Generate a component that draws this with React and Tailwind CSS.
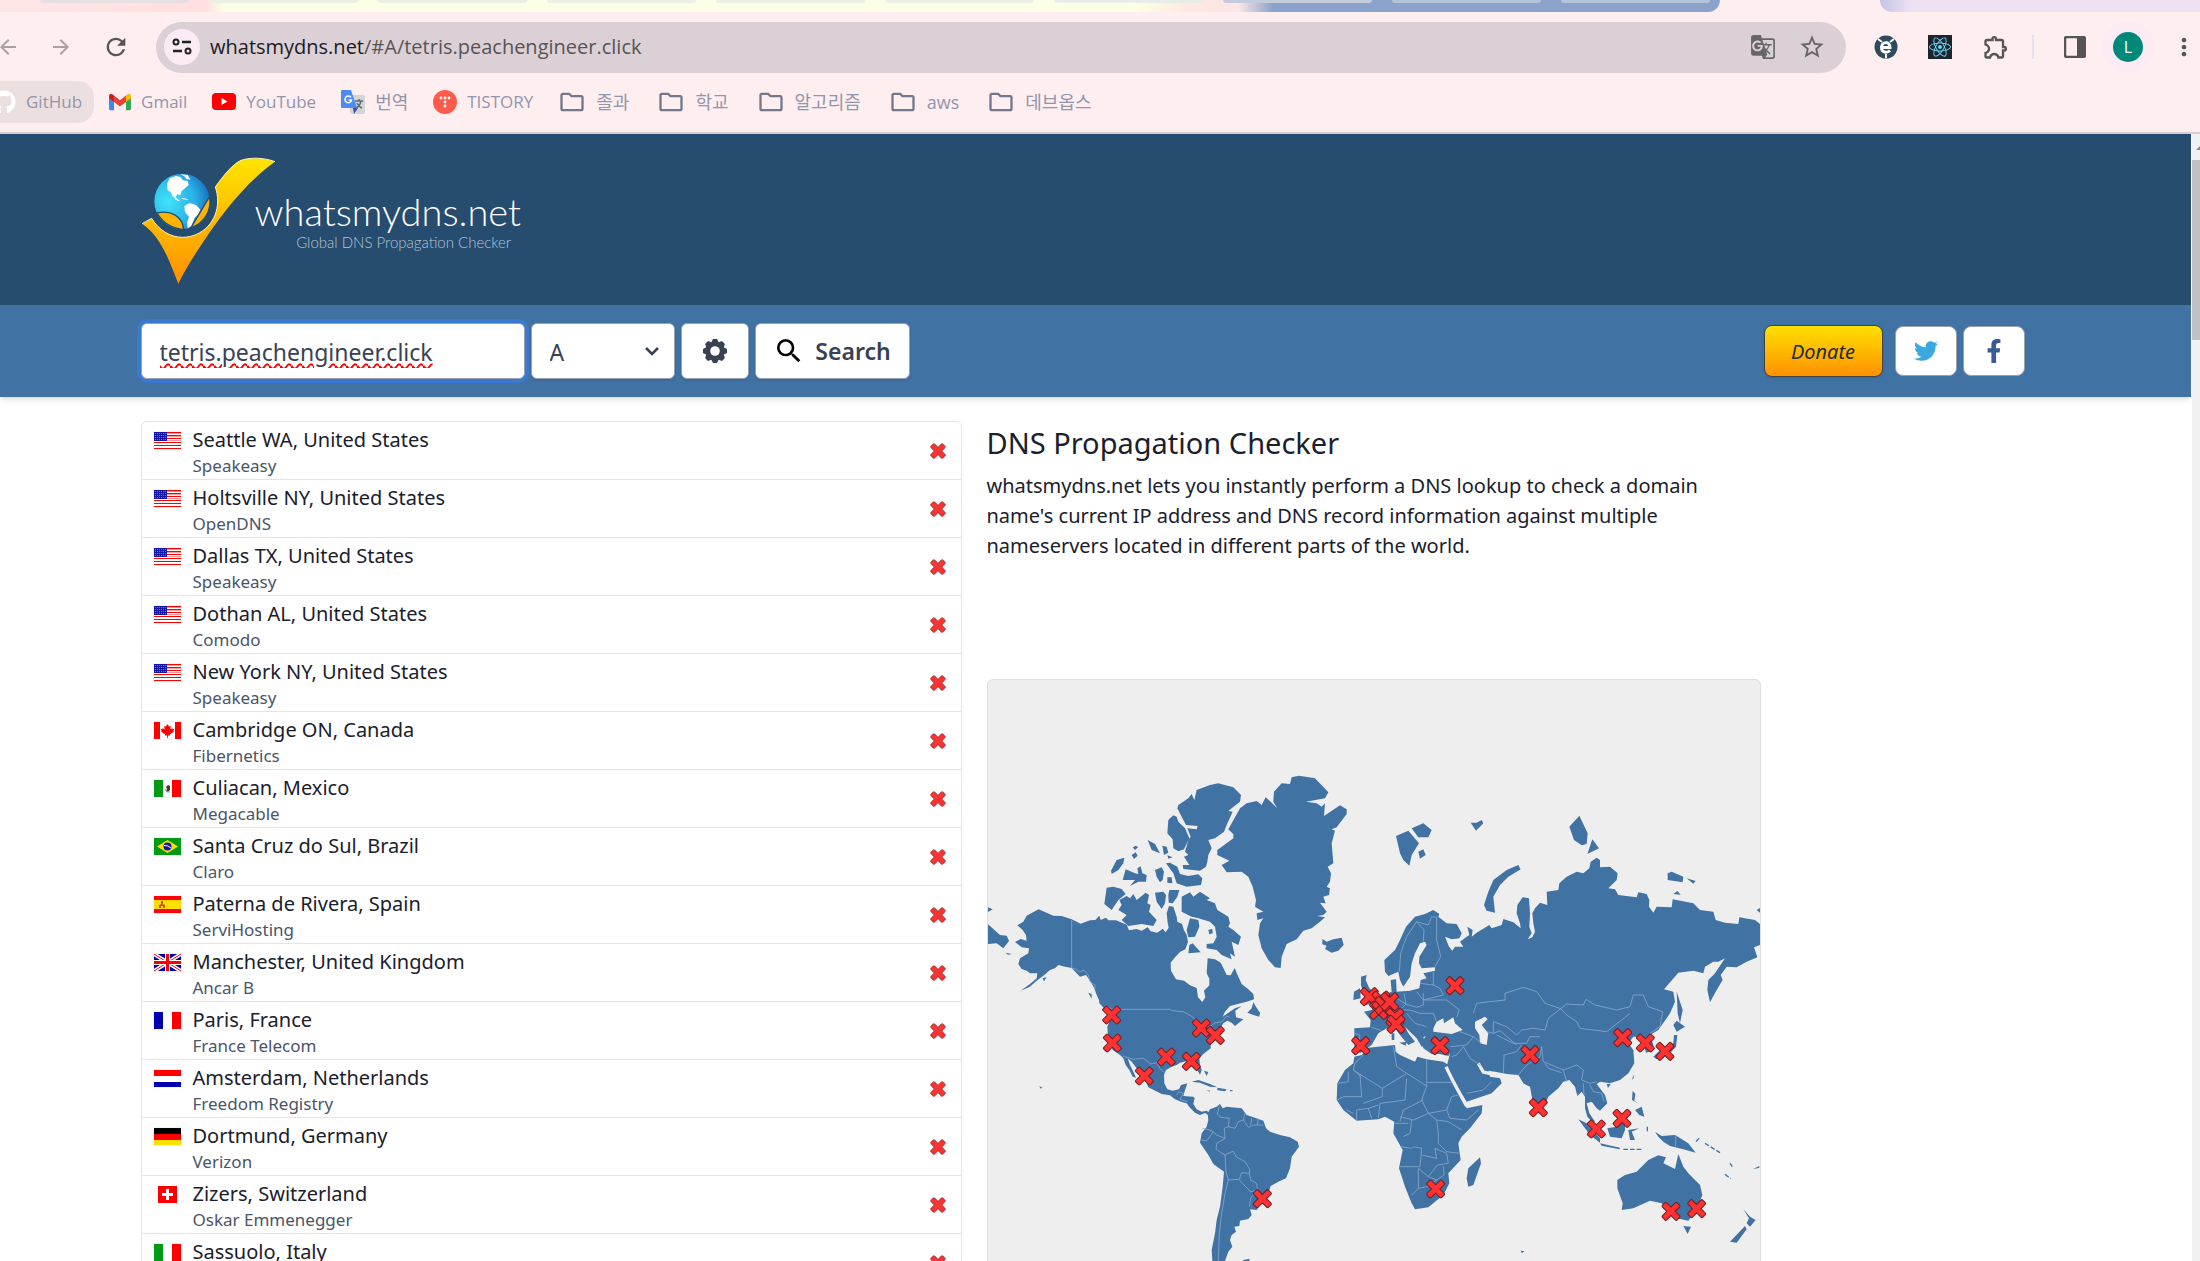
import React, { useState } from 'react';
import { FaGithub, FaTwitter, FaFacebookF, FaReact } from 'react-icons/fa';
import { MdArrowBack, MdArrowForward, MdRefresh, MdStarBorder, MdGTranslate, MdOutlineExtension, MdMoreVert, MdSearch, MdOutlineFolder } from 'react-icons/md';

const servers = [
  { flag: 'us', place: 'Seattle WA, United States', provider: 'Speakeasy' },
  { flag: 'us', place: 'Holtsville NY, United States', provider: 'OpenDNS' },
  { flag: 'us', place: 'Dallas TX, United States', provider: 'Speakeasy' },
  { flag: 'us', place: 'Dothan AL, United States', provider: 'Comodo' },
  { flag: 'us', place: 'New York NY, United States', provider: 'Speakeasy' },
  { flag: 'ca', place: 'Cambridge ON, Canada', provider: 'Fibernetics' },
  { flag: 'mx', place: 'Culiacan, Mexico', provider: 'Megacable' },
  { flag: 'br', place: 'Santa Cruz do Sul, Brazil', provider: 'Claro' },
  { flag: 'es', place: 'Paterna de Rivera, Spain', provider: 'ServiHosting' },
  { flag: 'gb', place: 'Manchester, United Kingdom', provider: 'Ancar B' },
  { flag: 'fr', place: 'Paris, France', provider: 'France Telecom' },
  { flag: 'nl', place: 'Amsterdam, Netherlands', provider: 'Freedom Registry' },
  { flag: 'de', place: 'Dortmund, Germany', provider: 'Verizon' },
  { flag: 'ch', place: 'Zizers, Switzerland', provider: 'Oskar Emmenegger' },
  { flag: 'it', place: 'Sassuolo, Italy', provider: '' },
];

const markers = [
  [-565, 705], [-563, 789], [-467, 888], [-401, 831], [-326, 844], [-296, 744], [-254, 766], [-113, 1256],
  [182, 797], [208, 650], [236, 691], [243, 660], [252, 676], [285, 712], [269, 665], [288, 733], [420, 797],
  [465, 617], [690, 824], [715, 983], [889, 1047], [966, 1015], [968, 773], [1036, 789], [1095, 814],
  [407, 1227], [1113, 1294], [1190, 1286],
];

const tabs = ['bg-[#e7e0e3]', 'bg-[#eaf0e6]', 'bg-[#eaf0e6]', 'bg-[#eaf0e6]', 'bg-[#eaf0e6]', 'bg-[#eaf0e6]', 'bg-[#e8ece6]', 'bg-[#c4ccdb]', 'bg-[#b4c4da]', 'bg-[#b4c4da]'];

const CROSS = 'M-6 -31H6Q9 -31 9 -27V-9H27Q31 -9 31 -6V6Q31 9 27 9H9V27Q9 31 6 31H-6Q-9 31 -9 27V9H-27Q-31 9 -31 6V-6Q-31 -9 -27 -9H-9V-27Q-9 -31 -6 -31Z';

function Flag({ code }) {
  const h = (a, b, c) => (
    <>
      <rect width="27" height="6" fill={a} />
      <rect y="6" width="27" height="6" fill={b} />
      <rect y="12" width="27" height="5" fill={c} />
    </>
  );
  const v = (a, b, c) => (
    <>
      <rect width="9" height="17" fill={a} />
      <rect x="9" width="9" height="17" fill={b} />
      <rect x="18" width="9" height="17" fill={c} />
    </>
  );
  const flags = {
    us: (
      <>
        <rect width="27" height="17" fill="#fff" />
        {[0, 3, 6, 10, 13, 16].map(y => <rect key={y} y={y} width="27" height="1" fill="#f00" />)}
        {[1, 4, 8].map(y => <rect key={y} y={y} width="27" height="1" fill="#f99" />)}
        <rect width="13" height="9" fill="#1616a8" />
        {[1, 3, 5, 7].map(y => <path key={y} d={`M1 ${y + 0.5}H12`} stroke="#6b6bd0" strokeDasharray="1 1" />)}
      </>
    ),
    ca: (
      <>
        {v('#f00', '#fff', '#f00')}
        <rect x="6" width="15" height="17" fill="#fff" />
        <path d="M13.5 2l1.6 2.6 1.6-.6-.4 3.4 2-1.4.4 1.2 1.6-.2-1 2 .6.8-4 2.4.2 1.4-2.2-.2V16h-.8v-2.6l-2.2.2.2-1.4-4-2.4.6-.8-1-2 1.6.2.4-1.2 2 1.4-.4-3.4 1.6.6z" fill="#f00" />
      </>
    ),
    mx: (
      <>
        {v('#009a16', '#fff', '#f00')}
        <path d="M12 7l2-2 2 1v4l-2 2-2-1 1-2z" fill="#4a3a22" />
        <path d="M11 9l2 3 3 0" fill="none" stroke="#7fa9c0" />
      </>
    ),
    br: (
      <>
        <rect width="27" height="17" fill="#009a16" />
        <path d="M3 8.5L13.5 2 24 8.5 13.5 15z" fill="#ffe000" />
        <circle cx="13.500" cy="8.500" r="4" fill="#1616a8" />
        <path d="M10 7.500q4-.5 7 2.500" fill="none" stroke="#fff" />
      </>
    ),
    es: (
      <>
        <rect width="27" height="17" fill="#ffdf00" />
        <rect width="27" height="4" fill="#f00" />
        <rect y="13" width="27" height="4" fill="#f00" />
        <path d="M5 12V9l2-1V5h2v3l2 1v3H9v-2H7v2z" fill="#d4502a" />
      </>
    ),
    gb: (
      <>
        <rect width="27" height="17" fill="#0000a8" />
        <path d="M0 0L27 17M27 0L0 17" stroke="#fff" strokeWidth="4" />
        <path d="M0 0L27 17M27 0L0 17" stroke="#f00" strokeWidth="1" />
        <path d="M13.500 0V17M0 8.500H27" stroke="#fff" strokeWidth="5" />
        <path d="M13.500 0V17M0 8.500H27" stroke="#f00" strokeWidth="3" />
      </>
    ),
    fr: v('#0000b0', '#fff', '#f00'),
    it: v('#009a16', '#fff', '#f00'),
    nl: h('#f00', '#fff', '#0000b0'),
    de: h('#000', '#f00', '#ffdf00'),
  };
  if (code === 'ch') {
    return (
      <svg viewBox="0 0 19 17" className="mx-1 h-[17px] w-[19px] shrink-0">
        <rect width="19" height="17" fill="#f00" />
        <path d="M9.500 3V14M4 8.500H15" stroke="#fff" strokeWidth="3" />
      </svg>
    );
  }
  return (
    <svg viewBox="0 0 27 17" className="h-[17px] w-[27px] shrink-0 ring-1 ring-gray-100">
      {flags[code]}
    </svg>
  );
}

function Cross() {
  return (
    <svg viewBox="-30 -30 60 60" className="size-4">
      <path d={CROSS} transform="rotate(45)" fill="#ff3131" stroke="#b53a3a" strokeWidth="4" />
    </svg>
  );
}

function Bookmark({ icon, children }) {
  return (
    <a href="#" className="flex items-center gap-2.5">
      {icon}
      {children}
    </a>
  );
}

function BrowserChrome() {
  const folder = <MdOutlineFolder className="size-7 text-[#74788c]" />;
  return (
    <div className="bg-[#ffeeef]">
      <div className="flex h-3">
        <div className="flex min-w-0 flex-1 gap-5 overflow-hidden rounded-br-xl bg-[linear-gradient(90deg,#ffe6e6_0,#ffe0de_12%,#fcffe5_13%,#fcffe5_66%,#fde8e3_69%,#fde6e6_72%,#8ba3ca_74%,#8ba3ca_100%)] pl-10">
          {tabs.map((color, i) => <div key={i} className={`h-[3px] w-[149px] shrink-0 rounded-b-lg ${color}`} />)}
        </div>
        <div className="w-40" />
        <div className="w-80 rounded-bl-xl bg-linear-to-r from-[#c5c5e4] to-[#efe1f4] to-10%" />
      </div>
      <div className="flex items-center gap-[30px] pt-[9px] text-[#555]">
        <div className="flex items-center gap-[29px]">
          <button aria-label="Back" className="-ml-1 text-[#aaa0a2]"><MdArrowBack className="size-6" /></button>
          <button aria-label="Forward" className="text-[#aaa0a2]"><MdArrowForward className="size-6" /></button>
          <button aria-label="Reload"><MdRefresh className="size-7" /></button>
        </div>
        <div className="-mr-0.5 -ml-1 flex h-[51px] flex-1 items-center rounded-full bg-[#dcd0d7] pr-5 pl-2">
          <button aria-label="Site information" className="flex size-9 items-center justify-center rounded-full bg-[#fbebf4]">
            <svg viewBox="0 0 20 18" className="h-[18px] w-5" fill="none" stroke="#222" strokeWidth="2">
              <circle cx="4" cy="4" r="2.500" />
              <circle cx="16" cy="13" r="2.500" />
              <path d="M10 4H19M1 13H10" strokeWidth="2.500" />
            </svg>
          </button>
          <span className="ml-2.5 flex-1 text-xl text-[#555]"><span className="text-[#1b1b1f]">whatsmydns.net</span>/#A/tetris.peachengineer.click</span>
          <button aria-label="Translate" className="mr-[22px]"><MdGTranslate className="size-[26px] text-[#666]" /></button>
          <button aria-label="Bookmark"><MdStarBorder className="size-7 text-[#666]" /></button>
        </div>
        <div className="flex items-center pr-0.5">
          <svg viewBox="0 0 24 24" className="mr-[30px] size-6">
            <circle cx="12" cy="12" r="11.500" fill="#2f4a5e" />
            <path d="M4 4l4 3M20 4l-4 3M12 19v4" fill="none" stroke="#fff" strokeWidth="2" />
            <path d="M8 12.500h8c0-7-8.500-6-8.500 0 0 5.500 6 5.500 8.500 3" fill="none" stroke="#fff" strokeWidth="3" />
          </svg>
          <span className="mr-[30px] flex size-6 items-center justify-center bg-[#20232a]"><FaReact className="size-[22px] text-[#61dafb]" /></span>
          <MdOutlineExtension className="mr-[22px] size-7" />
          <span className="mr-[30px] h-6 w-0.5 bg-[#e4e0ee]" />
          <svg viewBox="0 0 22 22" className="mr-4 size-[22px]">
            <rect x="1" y="1" width="20" height="20" rx="2" fill="none" stroke="#555" strokeWidth="2.500" />
            <rect x="13" y="1" width="8" height="20" fill="#555" />
          </svg>
          <span className="mr-4 flex size-[52px] items-center justify-center rounded-full bg-[#fbebf4]">
            <span className="flex size-[30px] items-center justify-center rounded-full bg-[#00897b] text-base text-white">L</span>
          </span>
          <button aria-label="Menu"><MdMoreVert className="size-7" /></button>
        </div>
      </div>
      <nav className="flex h-[61px] items-center gap-[25px] border-b-2 border-[#d8cbd2] pb-0.5 text-[17px] text-[#9096ad]">
        <a href="#" className="-mr-2.5 -ml-2 flex h-[42px] items-center gap-2.5 rounded-r-2xl bg-[#ecdfdf] pr-3">
          <FaGithub className="size-6 text-white" />GitHub
        </a>
        <Bookmark
          icon={
            <svg viewBox="0 0 24 18" className="h-[18px] w-[22px]">
              <path d="M0 4v12q0 2 2 2h3.500V8z" fill="#4285f4" />
              <path d="M24 4v12q0 2-2 2h-3.500V8z" fill="#34a853" />
              <path d="M18.500 2l2-1.500Q24-1 24 3v2l-5.500 4z" fill="#fbbc04" />
              <path d="M5.500 2L12 7l6.500-5v7L12 14 5.500 9z" fill="#ea4335" />
              <path d="M0 3Q0-1 3.500.5L5.500 2v7L0 5z" fill="#c5221f" />
            </svg>
          }
        >
          Gmail
        </Bookmark>
        <Bookmark
          icon={
            <svg viewBox="0 0 24 17" className="h-[17px] w-6">
              <rect width="24" height="17" rx="4" fill="#f00" />
              <path d="M9.500 5v7l6-3.500z" fill="#fff" />
            </svg>
          }
        >
          YouTube
        </Bookmark>
        <Bookmark
          icon={
            <svg viewBox="0 0 24 24" className="size-6">
              <rect x="9" y="5" width="15" height="19" rx="2" fill="#d5d5d5" />
              <path d="M12 18h5l-4 6z" fill="#3850c0" />
              <path d="M1 0h9l6 18H1q-1 0-1-1V1q0-1 1-1z" fill="#4c8bf5" />
              <path d="M14 11h8M18 9v2M20 11q-1 5-5 7M16 13q2 4 5 5" fill="none" stroke="#5d6b73" strokeWidth="1.500" />
              <path d="M10 7.500A3.300 3.300 0 1 0 10.500 10H7.500" fill="none" stroke="#fff" strokeWidth="1.500" />
            </svg>
          }
        >
          <span className="text-lg">번역</span>
        </Bookmark>
        <Bookmark
          icon={
            <svg viewBox="0 0 24 24" className="size-6">
              <circle cx="12" cy="12" r="12" fill="#ff5a4a" />
              {[[8, 8], [12, 8], [16, 8], [12, 12], [12, 16]].map(([x, y]) => <circle key={`${x}-${y}`} cx={x} cy={y} r="1.400" fill="#fff" />)}
            </svg>
          }
        >
          TISTORY
        </Bookmark>
        {['졸과', '학교', '알고리즘', 'aws', '데브옵스'].map(name => (
          <Bookmark key={name} icon={folder}><span className="pr-[3px] text-lg">{name}</span></Bookmark>
        ))}
      </nav>
    </div>
  );
}

function Logo() {
  return (
    <a href="#" className="flex items-start">
      <svg viewBox="60 78 405 384" className="h-32 w-[135px]">
        <defs>
          <linearGradient id="tick" x1="0" y1="0" x2="0" y2="1">
            <stop offset="0" stopColor="#ffe400" />
            <stop offset="1" stopColor="#ff9000" />
          </linearGradient>
          <radialGradient id="globe" cx=".25" cy=".5" r=".8">
            <stop offset="0" stopColor="#3fe4fb" />
            <stop offset=".6" stopColor="#2bb0e6" />
            <stop offset="1" stopColor="#1268b8" />
          </radialGradient>
        </defs>
        <path d="M63 278L92 262C115 300 150 319 185 319C245 318 290 270 290 210C290 195 287 180 283 168C310 130 335 100 360 88C390 78 430 80 462 92C380 150 310 240 262 310C225 365 195 410 172 458C145 390 120 315 63 278Z" fill="url(#tick)" />
        <path d="M63 278L92 262C115 300 150 319 185 319C245 318 290 270 290 210C290 195 287 180 283 168C310 130 335 100 360 88C390 78 430 80 462 92" fill="none" stroke="#fff1a8" strokeWidth="3" />
        <circle cx="183" cy="211" r="83" fill="url(#globe)" />
        <path d="M138 160L146 142L165 135L178 138L186 148L200 150L203 162L192 172L182 180L178 192L168 190L164 200L176 208L170 210L155 196L148 182L140 178ZM178 130L200 132L208 146L196 144L190 136ZM190 225L205 216L225 222L238 236L232 250L220 262L212 284L200 292L198 275L204 258L192 244Z" fill="#fff" />
        <path d="M162 203L176 210M182 202L200 206" stroke="#fff" strokeWidth="3" />
        <path d="M108 246C150 236 185 256 188 296C155 292 125 275 108 246Z" fill="#ffb300" stroke="#264c70" strokeWidth="4" />
        <path d="M266 196L210 290C250 277 272 240 266 196Z" fill="#ffb300" stroke="#264c70" strokeWidth="4" />
      </svg>
      <span className="-ml-[21px] mt-8 flex flex-col items-end font-['Lato','Open_Sans',sans-serif] font-light text-white">
        <span className="text-[38px] leading-11">whatsmydns.net</span>
        <span className="pr-2.5 text-[15px] leading-[18px] text-[#b4c5d2]">Global DNS Propagation Checker</span>
      </span>
    </a>
  );
}

function SearchBar() {
  const [domain, setDomain] = useState('tetris.peachengineer.click');
  const box = 'h-14 rounded-md border border-gray-400 bg-white shadow-sm';
  return (
    <div className="relative bg-[#4072a4] py-[18px] shadow-md">
      <div className="mx-auto flex max-w-[1910px] items-center justify-between pr-[26px]">
        <form className="flex gap-1.5 text-[#384252]" onSubmit={e => e.preventDefault()}>
          <input
            aria-label="Domain"
            value={domain}
            onChange={e => setDomain(e.target.value)}
            className={`${box} w-96 px-[18px] pt-0.5 text-[23px] ring-4 ring-[#3b78cf] outline-none underline decoration-[#f00] decoration-wavy decoration-2 underline-offset-2`}
          />
          <span className="relative">
            <select aria-label="Record type" className={`${box} w-36 appearance-none px-[18px] pt-0.5 text-[23px]`}>
              <option>A</option>
            </select>
            <svg viewBox="0 0 14 10" className="pointer-events-none absolute top-6 right-4 h-[10px] w-3.5" fill="none" stroke="#384252" strokeWidth="2.500">
              <path d="M1 1L7 7L13 1" />
            </svg>
          </span>
          <button aria-label="Settings" className={`${box} flex w-[68px] items-center justify-center`}>
            <svg viewBox="-12 -12 24 24" className="size-6" fill="#384252">
              {[0, 45, 90, 135].map(a => <path key={a} d="M-4 -8L-2 -12H2L4 -8V8L2 12H-2L-4 8Z" transform={`rotate(${a})`} />)}
              <circle r="9" />
              <circle r="4.800" fill="#fff" />
            </svg>
          </button>
          <button className={`${box} flex w-[155px] items-center justify-center gap-2.5 text-[23px] font-semibold`}>
            <MdSearch className="size-8 text-black" />
            Search
          </button>
        </form>
        <div className="flex items-center gap-1.5">
          <a href="#" className="mr-1.5 flex h-[52px] w-[119px] items-center justify-center rounded-lg border border-[#444] bg-linear-to-b from-[#ffe000] to-[#ff9000] pt-0.5 text-xl text-[#222b38] italic shadow-sm">Donate</a>
          <a href="#" aria-label="Twitter" className="flex h-[50px] w-[62px] items-center justify-center rounded-lg border border-gray-400 bg-white"><FaTwitter className="size-6 text-[#3aa9df]" /></a>
          <a href="#" aria-label="Facebook" className="flex h-[50px] w-[62px] items-center justify-center rounded-lg border border-gray-400 bg-white"><FaFacebookF className="size-6 text-[#3b5998]" /></a>
        </div>
      </div>
    </div>
  );
}

function WorldMap() {
  return (
    <svg viewBox="0 0 2316 2100" className="block w-full" role="img" aria-label="World map">
      <g transform="translate(-24 180)" fill="#4072a4">
        <path d="M140 527L176 508L220 527L245 528L275 538L302 551L330 541L346 540L358 527L362 540L378 533L385 541L408 541L440 554L447 571L470 567L485 572L503 562L512 574L532 578L548 566L557 577L566 563L563 548L560 520L567 498L580 500L590 530L592 545L606 552L612 571L620 585L624 606L616 628L600 636L585 652L572 668L573 692L588 718L612 722L630 736L650 744L654 772L667 786L676 772L672 752L688 736L688 716L680 700L683 655L705 658L722 668L733 690L740 705L752 706L764 684L775 710L785 732L805 748L820 762L822 778L800 785L770 793L750 798L735 815L728 830L745 818L765 805L785 798L766 812L768 832L790 838L765 858L755 848L742 842L730 850L722 862L715 870L722 880L700 895L692 915L692 925L670 942L658 955L660 975L665 990L660 1004L652 990L640 970L625 962L600 968L590 975L575 980L558 990L552 1005L553 1030L562 1048L578 1052L597 1048L603 1035L622 1030L615 1050L610 1068L640 1070L644 1075L640 1092L650 1108L665 1115L680 1112L690 1120L683 1124L675 1119L660 1125L645 1118L630 1103L620 1090L605 1086L585 1078L570 1066L545 1062L505 1042L500 1030L490 1008L470 985L455 965L443 955L450 975L460 995L468 1013L458 1010L448 990L437 975L430 955L420 945L398 930L385 900L382 860L390 840L380 815L368 800L358 790L357 780L350 765L343 745L330 722L318 705L300 710L275 684L255 680L235 675L225 685L210 690L193 705L170 722L150 740L122 752L150 732L170 715L172 700L150 700L140 692L125 687L115 672L120 655L145 640L147 625L125 622L105 606L122 597L140 602L138 585L128 570L112 556L130 545Z" />
        <path d="M683 1120L690 1108L710 1100L720 1092L728 1105L740 1100L785 1105L800 1125L820 1132L850 1142L858 1165L870 1175L900 1185L930 1192L953 1205L957 1220L935 1250L930 1285L918 1315L895 1325L872 1338L865 1360L845 1385L830 1410L810 1408L815 1425L805 1437L780 1442L778 1458L763 1460L768 1475L755 1485L750 1500L757 1520L745 1535L735 1563L740 1640L710 1620L697 1563L695 1530L705 1480L710 1440L720 1400L728 1340L732 1295L700 1272L685 1245L660 1208L665 1180L680 1160L685 1140Z" />
        <path d="M780 205L800 190L830 183L845 195L857 172L872 185L892 205L880 185L882 155L905 130L930 132L935 112L957 107L1005 115L1045 157L1035 175L978 185L1010 190L1025 200L1035 190L1032 228L1080 196L1100 208L1100 222L1070 262L1055 268L1065 272L1055 310L1060 370L1043 380L1053 400L1050 425L1040 440L1050 445L1047 465L1030 470L1037 490L1020 488L1040 515L1030 525L1012 528L1035 532L1020 545L995 565L970 572L950 598L920 612L905 650L902 684L885 682L865 660L845 625L835 585L840 550L850 535L832 540L830 520L850 515L825 500L828 480L818 440L805 410L785 395L740 397L725 375L748 362L712 345L712 330L760 295L760 283L745 268Z" />
        <path d="M650 150L690 135L715 130L760 142L783 165L780 185L755 205L745 213L758 215L740 255L732 275L705 295L685 300L695 325L685 345L682 365L678 380L660 392L610 387L608 375L628 375L612 350L625 345L615 335L625 300L632 290L622 265L650 268L653 258L618 255L605 230L592 205L595 195L625 175L635 162L643 180Z" />
        <path d="M565 240L580 226L590 230L595 245L615 265L628 295L612 328L595 334L580 325L578 298L562 280ZM503 300L525 312L540 340L515 330ZM547 317L560 320L565 338L552 345ZM458 322L468 317L474 322L465 330ZM455 345L467 337L473 347L462 357ZM562 346L578 352L565 356ZM410 360L433 353L430 370L415 390L395 402L393 392ZM437 388L465 400L475 402L472 385L482 379L487 400L500 405L498 425L475 425L450 438L465 420L428 420ZM525 390L545 382L552 395L548 420L540 427L530 410ZM558 370L570 368L592 380L600 402L625 408L655 403L667 415L663 435L620 440L590 430L580 400ZM562 412L575 412L577 430L562 428ZM380 443L400 440L425 447L437 462L415 480L395 510L373 492Z" />
        <path d="M418 480L440 468L450 475L460 462L470 480L497 458L507 465L502 490L512 495L507 515L530 540L520 558L485 552L445 558L425 540L440 525L415 510L425 495ZM525 458L550 455L558 465L555 490L545 507L530 485ZM568 450L598 450L592 470L578 490L566 488L565 465ZM605 470L630 457L640 470L660 455L690 475L680 480L705 490L712 510L745 530L750 550L745 560L760 570L783 590L775 615L755 605L765 650L750 640L755 658L725 645L710 630L680 625L680 612L700 610L710 590L705 560L690 545L655 535L635 530L605 515ZM630 535L655 540L658 560L645 590L625 592L620 570ZM628 615L638 610L662 637L625 640ZM685 570L697 566L698 580L688 583Z" />
        <path d="M1027 597L1040 605L1060 598L1085 593L1091 615L1075 632L1055 638L1035 627L1040 617L1027 613ZM24 553L60 585L80 587L87 603L70 625L50 610L24 612ZM24 502L38 508L24 516ZM820 787L828 800L840 818L838 830L820 825L802 818L815 805ZM635 1025L655 1020L690 1032L712 1042L690 1040L660 1028ZM712 1043L740 1048L735 1054L712 1051ZM750 1050L758 1051V1054H750ZM678 1050L690 1052V1055ZM177 1039L186 1042L183 1047ZM325 758L335 762L335 776ZM188 715L200 712L192 724ZM76 638L96 642L84 644ZM790 1560L808 1556V1566H790ZM672 992L685 996L680 1008Z" />
        <g fill="none" stroke="#86a8cb" strokeWidth="2.500">
          <path d="M275 540V684L290 688L298 696L312 690L325 705L330 725L345 735L345 745M375 797L400 808H570L575 812L610 815L640 832L655 855L690 860L705 848L725 846L740 828L750 832M428 948L460 958L490 955L512 972L530 968L540 985L552 998M590 1065L597 1055L610 1060L600 1078L622 1085M718 1100L712 1122L722 1132L748 1135L745 1160L733 1165L735 1195L710 1185L695 1172L668 1165M735 1195L710 1210L708 1228L735 1245L738 1295L745 1320L735 1360L725 1420L718 1480L715 1563M735 1245L760 1233L768 1250L795 1265L810 1290L808 1300L785 1298L778 1318L745 1320M808 1300L812 1320L830 1330L832 1350L812 1356L778 1320M832 1350L812 1375L808 1400M745 1160L765 1165L775 1145L790 1140L795 1120M790 1140L805 1162L820 1155L850 1155M815 1135L812 1155M835 1135L832 1155M665 1200L680 1203L700 1175" />
        </g>
      </g>

      <g transform="translate(936 300)">
        <g fill="#4072a4">
          <path d="M253 540L285 510L300 480L318 440L345 410L375 402L400 390L418 402L415 410L440 430L470 432L485 460L478 475L455 478L435 470L447 500L457 512L465 500L490 500L480 485L500 470L508 465L502 440L518 450L515 470L530 458L568 435L575 445L605 435L610 417L640 427L662 445L660 430L650 400L652 375L668 352L687 355L690 400L688 440L695 460L683 478L697 472L705 455L700 430L697 400L705 385L720 368L742 375L740 335L775 330L778 310L800 290L830 275L850 280L868 265L872 245L890 233L900 240L900 262L930 260L953 280L950 300L925 325L945 328L955 345L1010 352L1015 337L1040 342L1048 360L1047 380L1060 398L1070 380L1115 382L1118 358L1180 370L1200 390L1240 395L1247 420L1275 428L1315 432L1318 412L1365 420L1380 432V495L1362 502L1372 532L1340 545L1310 562L1280 560L1262 585L1268 600L1250 630L1230 667L1222 630L1225 600L1245 580L1275 535L1255 545L1240 545L1215 560L1210 580L1180 572L1135 578L1092 628L1120 635L1125 665L1110 700L1075 750L1050 765L1060 795L1058 812L1038 818L1030 790L1015 770L1000 770L985 790L1000 810L1003 850L985 880L960 900L930 910L900 905L890 912L915 945L922 970L900 992L890 985L875 965L860 970L868 1000L885 1025L880 1030L862 1010L855 985L855 950L845 935L832 948L825 920L808 900L790 905L775 925L745 950L735 975L715 1000L700 975L690 920L670 910L655 885L620 882L585 875L565 872L570 890L600 895L605 910L575 940L500 965L465 910L440 860L450 820L445 828L420 822L395 822L370 805L365 785L378 768L370 772L378 795L365 800L350 775L330 755L315 740L325 760L345 785L325 795L300 765L285 745L260 745L235 760L215 795L180 820L163 800V745L210 742L212 720L192 695L215 690L235 660L265 640L275 635L272 600L288 598L290 635L330 632L358 625L362 600L380 595L370 580L405 572V562L365 565L357 550L358 530L380 495L375 485L360 490L345 520L335 550L330 590L310 620L300 600L295 575L265 588L255 575Z" />
          <path d="M205 803L285 795L287 815L300 825L345 845L352 830L380 838L430 845L445 855L460 900L480 940L500 985L547 975L545 1000L510 1045L485 1070L475 1090L482 1140L445 1180L448 1210L430 1245L385 1282L345 1288L335 1270L315 1220L297 1165L308 1110L280 1060L283 1025L255 1010L235 1018L170 1022L130 990L110 960L112 910L135 870L160 850L163 830L185 825Z" />
          <path d="M183 590L200 585L197 600L208 625L235 650L228 670L195 675L205 660L190 640L183 615ZM162 635L180 625L182 655L160 660ZM540 1132L543 1150L520 1215L505 1220L500 1195L505 1165ZM952 1200L975 1185L1010 1175L1045 1140L1075 1126L1098 1132L1090 1150L1125 1167L1135 1122L1150 1160L1165 1180L1200 1215L1207 1245L1190 1290L1165 1322L1130 1315L1110 1290L1085 1270L1050 1262L1000 1285L965 1290L968 1270L952 1225ZM1150 1338L1173 1340L1163 1362ZM1330 1288L1350 1310L1367 1320L1350 1340L1340 1330L1347 1315ZM1335 1338L1340 1348L1310 1388L1290 1385ZM1065 1055L1085 1068L1125 1065L1165 1090L1187 1118L1150 1108L1110 1098L1090 1085L1075 1070Z" />
          <path d="M922 1045L950 1040L975 1020V1050L965 1075L930 1070ZM835 1018L860 1030L900 1075V1088L870 1065ZM900 1090L960 1103L958 1108L905 1097ZM985 1050L1018 1045L995 1055L1005 1080L990 1080ZM998 932L1006 942L1003 962L1018 972L996 960ZM1005 990L1025 980L1033 1010L1018 1005ZM995 900L1003 882L1001 894ZM920 912H932L924 924ZM1060 830L1075 815L1100 805L1120 790L1122 765L1132 765L1128 800L1105 825L1070 838ZM1120 735L1130 722L1155 740L1130 755ZM1130 635L1148 690L1140 730L1133 700ZM552 375L565 335L580 300L620 270L655 255L662 268L625 290L600 315L580 350L585 398L560 392ZM288 168L325 152L357 190L335 225L328 257L310 240L300 220ZM335 145L370 130L395 150L385 172L355 172ZM355 215L370 208L377 225L360 236ZM512 128L530 128L545 120L550 130L528 152ZM808 140L838 107L863 160L860 192L845 196L822 180ZM877 178L897 205L862 222ZM1103 280L1115 275L1150 290L1148 307L1103 300ZM1160 295L1187 303L1180 311ZM1120 342L1132 333L1142 344ZM275 760H283V780H275ZM298 788L320 785L317 797ZM1370 390L1380 384V398ZM662 1412L673 1414L666 1420ZM1358 1168L1378 1158V1163Z" />
        </g>
        <path d="M400 745L410 725L430 715L432 730L460 712L465 730L488 750L455 762L400 755ZM525 725L555 710L563 718L545 735L565 760L560 795L540 790L538 765L525 745Z" fill="#eee" />
        <path d="M438 860L460 905L498 975L545 968M535 850L550 876L585 884" fill="none" stroke="#eee" strokeWidth="10" />
        <path d="M970 1108H1030M1188 1085L1200 1072M1215 1090L1260 1118M1275 1183L1292 1196M1290 1150L1297 1160M1042 1040V1055" fill="none" stroke="#4072a4" strokeWidth="4" strokeDasharray="14 6" />
        <g fill="none" stroke="#86a8cb" strokeWidth="2.500">
          <path d="M298 575L302 520L320 470L350 425L372 450L370 485M350 425L385 435L395 410L410 412V480L422 530L405 560M360 610L400 615L420 625L430 645L370 660L350 635M312 640L318 672L350 682L370 675V640M370 660L440 660L478 690L470 712M330 690L360 700L400 700L410 725M320 700L345 730L380 740M290 655L318 672L300 690L330 690M400 575V615M165 760L180 765L175 800M215 742L245 752" />
          <path d="M520 700L530 670L570 665L615 660L615 640L670 622L710 635L735 670L782 686L745 715L735 750L700 745L665 750L650 765L620 740L580 725V760L560 755M782 686L800 672L850 675L858 658L885 675L950 690L990 680L1000 645L1030 645L1045 680L1088 695L1080 740L1050 760M782 686L800 705L830 725L840 745L920 755L965 720L990 700M590 765L640 790L680 790L690 770L720 770M580 760L600 752L650 795M610 880L612 825L650 815L665 795M655 885L680 855L720 830L725 800L730 845L790 870L830 855L850 870L845 900L870 910L890 905M735 850L745 865L785 878M790 870L800 905M850 910L852 945M870 915L880 935L905 940L912 965M452 800L500 795L520 770L480 755M455 830L470 825L490 800L510 835L545 858M500 940L550 930L575 905M520 770L545 790" />
          <path d="M190 825L165 850L160 870L247 925L320 880L290 860L280 800M145 875V905L115 910M180 885L185 950H130L112 960M160 870L183 890M247 925V950L190 970M320 880L380 918V838M382 907H458M320 895L315 960L280 965L240 970L235 1015M380 918L365 960L385 1000L440 990L455 950L475 945M370 960L310 990L300 1025M300 1010L340 1020L385 1000L410 1020L415 1060V1090L440 1115L480 1120M410 1020L445 1025L485 1050M440 990L450 1015L500 1020L535 990M300 1100L335 1105L340 1100L365 1105L360 1160H300M365 1125L410 1135L405 1105L440 1120L445 1150L412 1155L385 1190L355 1165V1225L335 1245M385 1190L410 1200L432 1185L430 1160M355 1225L380 1220L410 1200M335 1020L330 1060L310 1070M170 1020V990L205 985L215 1015M205 985L235 975M1127 1068V1100M140 990L160 1000M285 1030H325" />
        </g>
        {markers.map(([x, y]) => (
          <path key={`${x},${y}`} d={CROSS} transform={`translate(${x} ${y}) rotate(45)`} fill="#ff3131" stroke="#6e1d22" strokeWidth="3" />
        ))}
      </g>
    </svg>
  );
}

export default function App() {
  return (
    <div className="flex h-screen flex-col overflow-hidden bg-white font-['Open_Sans','Noto_Sans_CJK_KR',sans-serif] text-[#1a202c]">
      <BrowserChrome />
      <div className="flex min-h-0 flex-1 font-['Noto_Sans','Open_Sans',sans-serif]">
        <div className="min-w-0 flex-1 overflow-hidden">
          <header className="bg-[#264c70] pt-[23px] pb-5">
            <div className="mx-auto max-w-[1910px]"><Logo /></div>
          </header>
          <SearchBar />
          <main className="mx-auto grid max-w-[1910px] grid-cols-[821fr_774fr_265fr] gap-[25px] pt-6">
            <ul className="rounded-md border border-[#e2e4e8]">
              {servers.map(s => (
                <li key={s.place} className="flex h-[58px] items-center border-b border-[#e2e4e8] pr-[15px] pl-3">
                  <span className="flex-1 self-start pt-1">
                    <span className="flex items-center gap-3 text-xl leading-7"><Flag code={s.flag} />{s.place}</span>
                    <span className="block pl-[39px] text-[17px] leading-6 text-[#4a5568]">{s.provider}</span>
                  </span>
                  <Cross />
                </li>
              ))}
            </ul>
            <section>
              <h1 className="mt-0.5 text-[29px] leading-10">DNS Propagation Checker</h1>
              <p className="mt-2 text-xl leading-[30px]">
                whatsmydns.net lets you instantly perform a DNS lookup to check a domain name's current IP address and DNS record information against multiple nameservers located in different parts of the world.
              </p>
              <div className="mt-[118px] overflow-hidden rounded-md border border-[#ddd] bg-[#eee]">
                <WorldMap />
              </div>
            </section>
          </main>
        </div>
        <div className="w-[9px] overflow-hidden border-l border-white bg-[#f1f1f1]">
          <svg viewBox="0 0 12 6" className="mt-2.5 ml-1 h-1.5 w-3"><path d="M0 6L6 0L12 6Z" fill="#888" /></svg>
          <div className="mt-2.5 h-[180px] bg-[#c1c1c1]" />
        </div>
      </div>
    </div>
  );
}
